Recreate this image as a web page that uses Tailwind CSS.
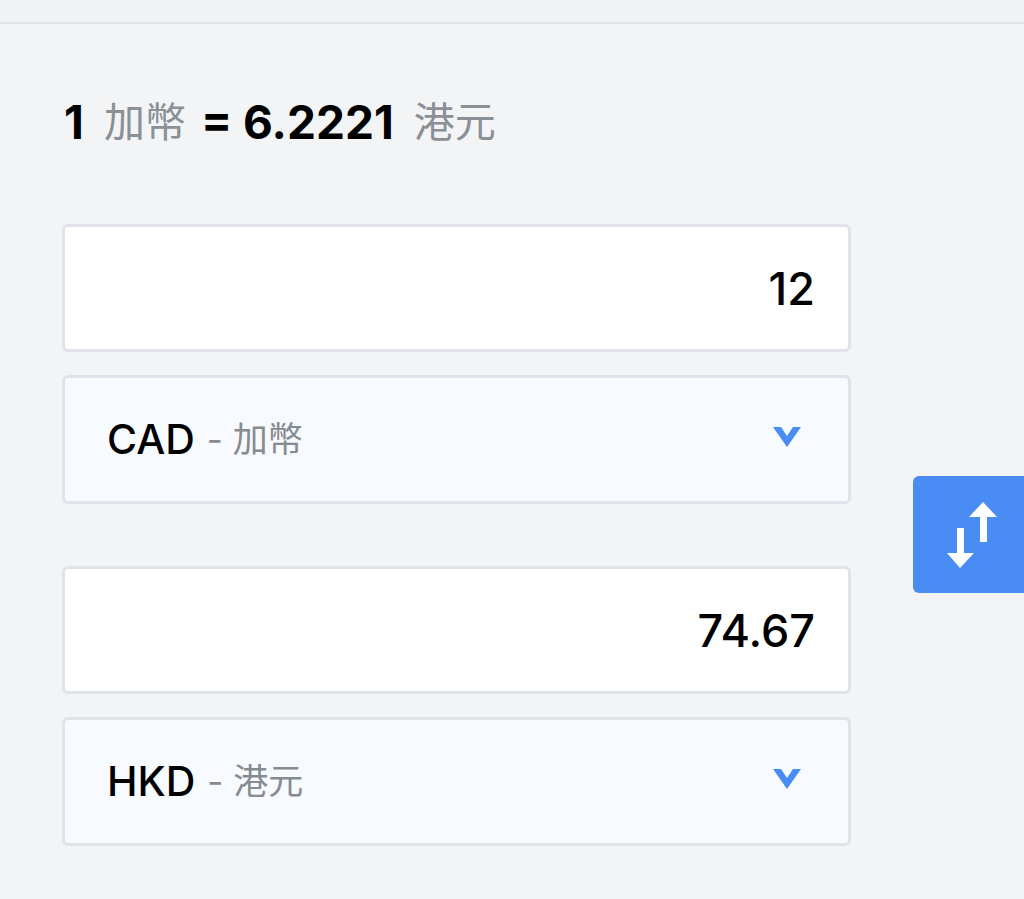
<!DOCTYPE html>
<html lang="en">
<head>
  <meta charset="UTF-8" />
  <title>Currency converter</title>
  <script src="https://cdn.jsdelivr.net/npm/@tailwindcss/browser@4"></script>
</head>
<body class="h-[899px] overflow-hidden bg-[#f3f4f6] font-['Inter','Noto_Sans_CJK_TC',sans-serif] text-black">

<!-- Top bar -->
<div class="h-6 bg-[#f1f2f4] border-b-2 border-[#e0e3e7]"></div>

<!-- Rate -->
<div class="h-[200px] pl-16 pt-[68px] flex items-start">
  <div class="flex items-center h-[60px] text-[46px] leading-none font-bold">
    <span class="w-[20px]">1</span>
    <span class="ml-[20px] text-[41px] font-normal text-[#8a9096]">加幣</span>
    <span class="ml-[15px]">= 6.2221</span>
    <span class="ml-[20px] text-[41px] font-normal text-[#8a9096]">港元</span>
  </div>
</div>

<!-- Converter -->
<div class="flex items-center pl-[62px]">
  <div class="w-[789px] flex flex-col">
    <div class="h-[128px] bg-white border-[3px] border-[#e0e3e7] rounded-md flex items-center justify-end pr-[33px] pt-[2px] font-medium text-[45px]">12</div>
    <div class="h-[129px] mt-[23px] bg-[#f7faff] border-[3px] border-[#e0e3e7] rounded-md flex items-center justify-between pl-[42px] pr-[47px]">
      <div class="flex items-center text-[41px] font-medium">
        <span>CAD</span>
        <span class="ml-[12px] text-[35px] font-normal text-[#868b90]">- 加幣</span>
      </div>
      <svg class="-mt-[5px]" width="28" height="20" viewBox="0 0 28 20"><path d="M0 0h8l6 9 6-9h8L14 20z" fill="#488cf4"/></svg>
    </div>
    <div class="h-[128px] mt-[62px] bg-white border-[3px] border-[#e0e3e7] rounded-md flex items-center justify-end pr-[33px] pt-[2px] font-medium text-[45px]">74.67</div>
    <div class="h-[129px] mt-[23px] bg-[#f7faff] border-[3px] border-[#e0e3e7] rounded-md flex items-center justify-between pl-[42px] pr-[47px]">
      <div class="flex items-center text-[41px] font-medium">
        <span>HKD</span>
        <span class="ml-[12px] text-[35px] font-normal text-[#868b90]">- 港元</span>
      </div>
      <svg class="-mt-[5px]" width="28" height="20" viewBox="0 0 28 20"><path d="M0 0h8l6 9 6-9h8L14 20z" fill="#488cf4"/></svg>
    </div>
  </div>

  <!-- Swap button -->
  <div class="ml-[62px] -mt-[1px] w-[111px] h-[117px] bg-[#488cf4] rounded-l-md flex items-center pl-[34px]">
    <svg width="50" height="66" viewBox="0 0 50 66" fill="#fff">
      <path d="M36 0l14 15h-10v25h-7V15H22z"/>
      <path d="M10 26h7v25h10L13 66 0 51h10z"/>
    </svg>
  </div>
</div>

</body>
</html>
